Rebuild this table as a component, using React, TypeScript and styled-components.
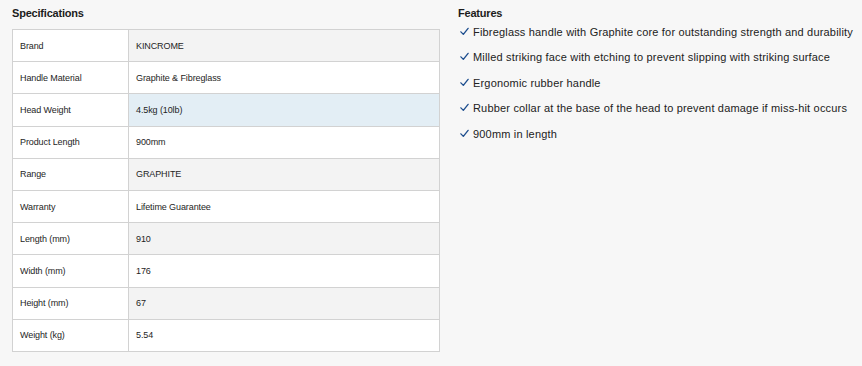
import styled, { createGlobalStyle } from "styled-components";

const GlobalStyle = createGlobalStyle`
  html, body {
    margin: 0;
    padding: 0;
    background: #f7f7f7;
    font-family: "Liberation Sans", Arial, sans-serif;
    color: #222;
  }
`

const Page = styled.div`
  display: flex;
  align-items: flex-start;
  gap: 18px;
  padding: 6px 0 0 12px;
  width: 862px;
  height: 366px;
  box-sizing: border-box;
`

const SpecColumn = styled.section`
  width: 428px;
  flex-shrink: 0;
`

const FeatureColumn = styled.section`
  flex: 1;
`

const Heading = styled.h3`
  margin: 0;
  font-size: 11px;
  font-weight: bold;
  letter-spacing: -0.2px;
  line-height: 14px;
  color: #1c1c1c;
`

const SpecTable = styled.table`
  margin-top: 9px;
  width: 100%;
  border-collapse: collapse;
  border: 1px solid #d2d2d2;
  font-size: 9px;
  letter-spacing: -0.1px;
  color: #1e1e1e;
`

const Label = styled.td`
  width: 108px;
  height: 31.2px;
  padding: 0 0 0 7px;
  background: #fff;
  border: 1px solid #d2d2d2;
  vertical-align: middle;
`

const Value = styled.td<{ $tone: "grey" | "white" | "blue" }>`
  padding: 0 0 0 7px;
  border: 1px solid #d2d2d2;
  vertical-align: middle;
  background: ${p => p.$tone === "grey" ? "#f3f3f3" : p.$tone === "blue" ? "#e3eef5" : "#fff"};
`

const FeatureList = styled.ul`
  list-style: none;
  margin: -1px 0 0 0;
  padding: 0 0 0 2px;
`

const FeatureItem = styled.li`
  display: flex;
  align-items: center;
  gap: 4px;
  height: 25.5px;
  font-size: 11px;
  letter-spacing: 0.18px;
  white-space: nowrap;
  color: #222;
`

const Tick = styled.svg`
  width: 9px;
  height: 9px;
  flex-shrink: 0;
  margin-top: -1px;
`

const specs: [string, string][] = [
  ["Brand", "KINCROME"],
  ["Handle Material", "Graphite & Fibreglass"],
  ["Head Weight", "4.5kg (10lb)"],
  ["Product Length", "900mm"],
  ["Range", "GRAPHITE"],
  ["Warranty", "Lifetime Guarantee"],
  ["Length (mm)", "910"],
  ["Width (mm)", "176"],
  ["Height (mm)", "67"],
  ["Weight (kg)", "5.54"],
]

const features = [
  "Fibreglass handle with Graphite core for outstanding strength and durability",
  "Milled striking face with etching to prevent slipping with striking surface",
  "Ergonomic rubber handle",
  "Rubber collar at the base of the head to prevent damage if miss-hit occurs",
  "900mm in length",
]

const App = () => {
  return (
    <>
      <GlobalStyle />
      <Page>
        <SpecColumn>
          <Heading>Specifications</Heading>
          <SpecTable>
            <tbody>
              {specs.map(([label, value], i) => (
                <tr key={label}>
                  <Label>{label}</Label>
                  <Value $tone={i === 2 ? "blue" : i % 2 === 0 ? "grey" : "white"}>{value}</Value>
                </tr>
              ))}
            </tbody>
          </SpecTable>
        </SpecColumn>

        <FeatureColumn>
          <Heading>Features</Heading>
          <FeatureList>
            {features.map(text => (
              <FeatureItem key={text}>
                <Tick viewBox="0 0 10 10">
                  <path d="M1 5.4 L3.7 8.2 L9 1.5" fill="none" stroke="#1f4f8f" strokeWidth="1.5" strokeLinecap="round" strokeLinejoin="round" />
                </Tick>
                {text}
              </FeatureItem>
            ))}
          </FeatureList>
        </FeatureColumn>
      </Page>
    </>
  );
}

export default App;
